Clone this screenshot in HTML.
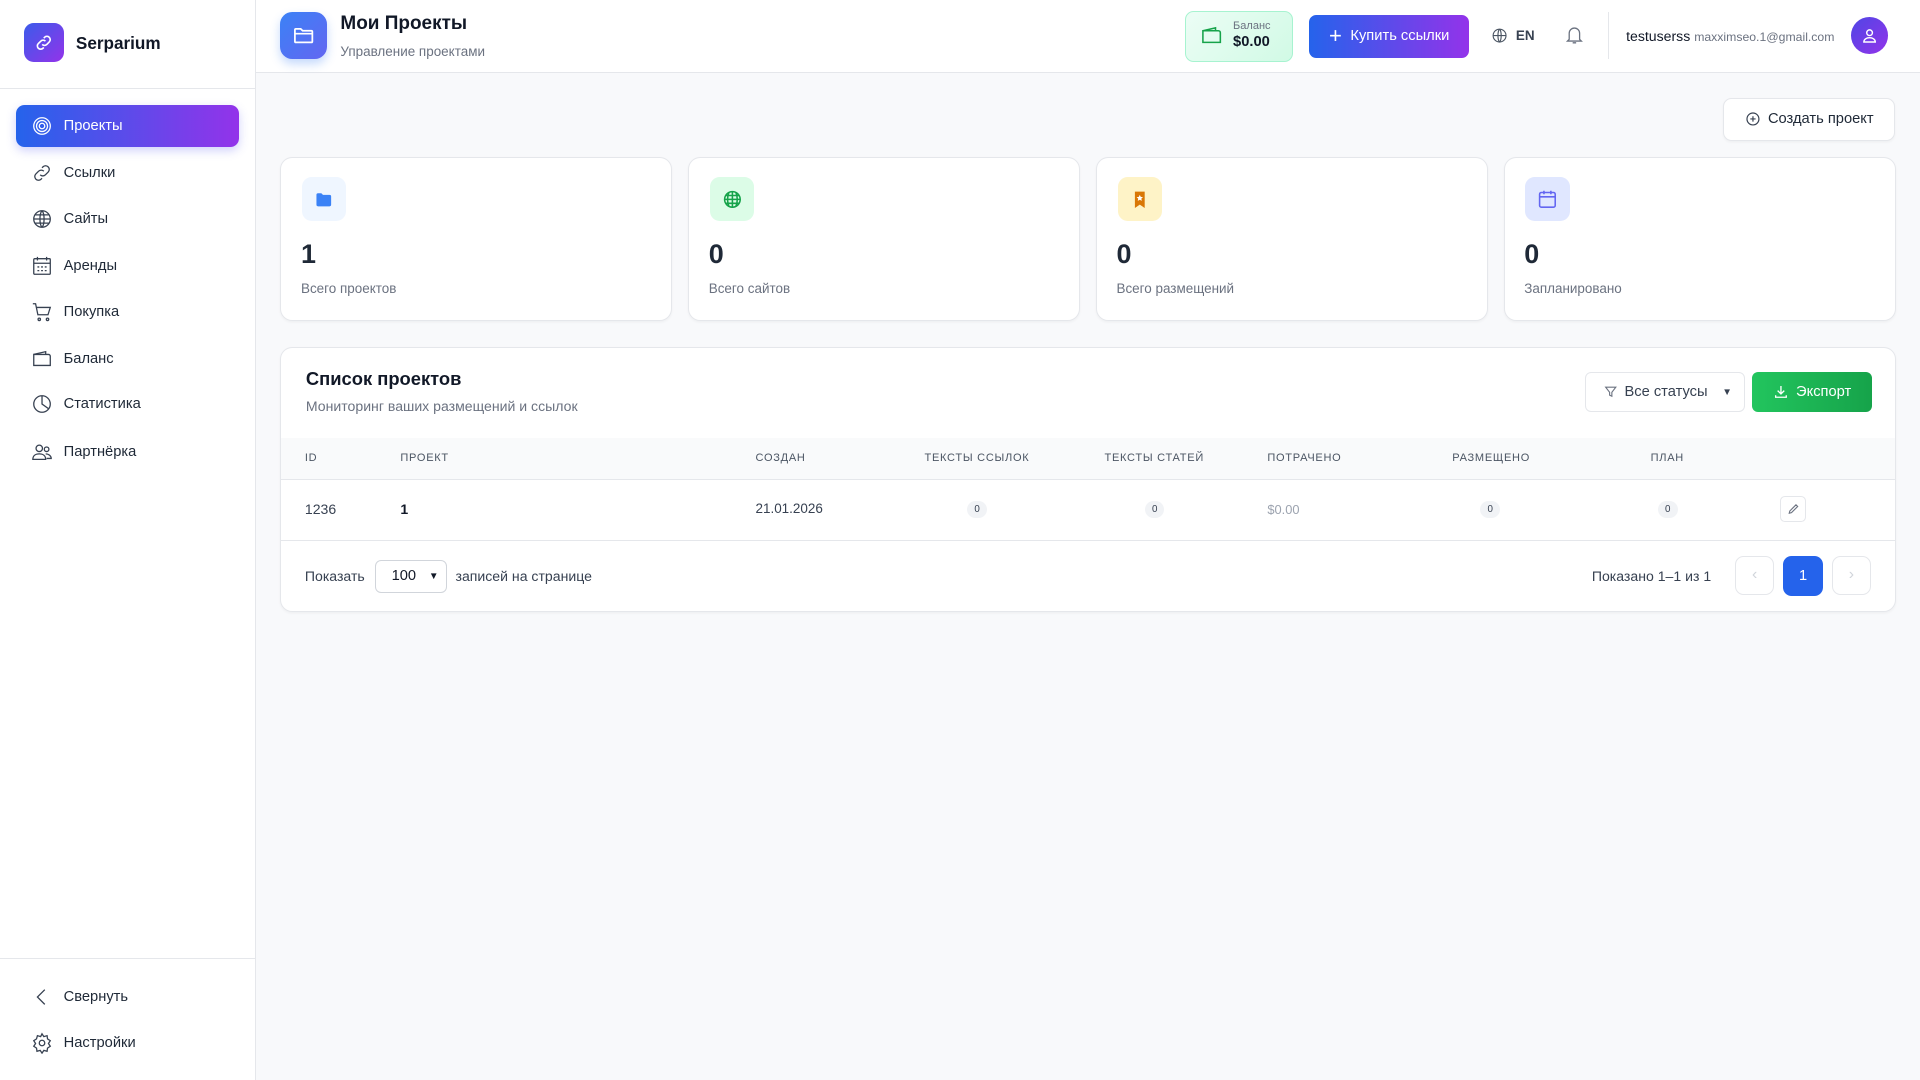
<!DOCTYPE html>
<html><head><meta charset="utf-8">
<style>
html{zoom:1.22449}
*{box-sizing:border-box;margin:0;padding:0}
body{width:1568px;height:882px;overflow:hidden;background:#f8f9fb;font-family:"Liberation Sans","DejaVu Sans",sans-serif;color:#111827;position:relative}
.a{position:absolute}
.side{left:0;top:0;width:209px;height:882px;background:#fff;border-right:1px solid #e5e7eb}
.nav{left:13px;width:182px;height:34px;display:flex;align-items:center;padding-left:12px;font-size:12px;color:#1f2937}
.nav svg{width:18px;height:18px;margin-right:9px;fill:none;stroke:#374151;stroke-width:1.4}
.card{background:#fff;border:1px solid #e5e7eb;border-radius:10px;box-shadow:0 1px 2px rgba(0,0,0,.04)}
.ic{left:17px;top:16px;width:36px;height:36px;border-radius:8px;display:flex;align-items:center;justify-content:center}
.num{left:16px;top:66px;font-size:22px;font-weight:bold;color:#1f2937}
.lbl{left:16px;top:101px;font-size:11px;color:#6b7280}
.th{top:369px;font-size:9px;letter-spacing:.6px;color:#4b5563}
.badge{top:409px;width:16px;height:14px;border-radius:7px;background:#f1f3f6;font-size:8px;color:#374151;text-align:center;line-height:14px}
</style></head><body>
<div class="a side">
  <div class="a" style="left:20px;top:19px;width:32px;height:32px;border-radius:8px;background:linear-gradient(135deg,#3b5bea,#9333ea);display:flex;align-items:center;justify-content:center">
    <svg width="16" height="16" viewBox="0 0 24 24" fill="none" stroke="#fff" stroke-width="2"><path d="M10 14a4 4 0 0 0 5.7 0l3-3a4 4 0 0 0-5.7-5.7l-1 1"/><path d="M14 10a4 4 0 0 0-5.7 0l-3 3a4 4 0 0 0 5.7 5.7l1-1"/></svg>
  </div>
  <div class="a" style="left:62px;top:27px;font-size:14px;font-weight:bold;color:#111827">Serparium</div>
  <div class="a" style="left:0;top:72px;width:208px;border-top:1px solid #e5e7eb"></div>
  <div class="a nav" style="top:86px;border-radius:7px;background:linear-gradient(90deg,#2563eb,#9333ea);color:#fff;box-shadow:0 3px 8px rgba(99,102,241,.3)"><svg viewBox="0 0 24 24" style="stroke:#fff"><circle cx="12" cy="12" r="9"/><circle cx="12" cy="12" r="6"/><circle cx="12" cy="12" r="3"/></svg>Проекты</div>
  <div class="a nav" style="top:124px"><svg viewBox="0 0 24 24"><path d="M10 14a4 4 0 0 0 5.7 0l3-3a4 4 0 0 0-5.7-5.7l-1 1"/><path d="M14 10a4 4 0 0 0-5.7 0l-3 3a4 4 0 0 0 5.7 5.7l1-1"/></svg>Ссылки</div>
  <div class="a nav" style="top:162px"><svg viewBox="0 0 24 24"><circle cx="12" cy="12" r="9"/><path d="M3 12h18M12 3c3 3 3 15 0 18M12 3c-3 3-3 15 0 18M4.5 7.5h15M4.5 16.5h15"/></svg>Сайты</div>
  <div class="a nav" style="top:200px"><svg viewBox="0 0 24 24"><rect x="3" y="4" width="18" height="17" rx="1"/><path d="M3 9h18M7 2v4M17 2v4M7 13h2M11 13h2M15 13h2M7 17h2M11 17h2M15 17h2"/></svg>Аренды</div>
  <div class="a nav" style="top:238px"><svg viewBox="0 0 24 24"><path d="M2 3h3l2.5 12h11L21 7H6"/><circle cx="9" cy="20" r="1.3"/><circle cx="18" cy="20" r="1.3"/></svg>Покупка</div>
  <div class="a nav" style="top:276px"><svg viewBox="0 0 24 24"><path d="M3 7h16a2 2 0 0 1 2 2v10H3z"/><path d="M3 7l13-3v3"/></svg>Баланс</div>
  <div class="a nav" style="top:313px"><svg viewBox="0 0 24 24"><circle cx="12" cy="12" r="9"/><path d="M12 3v9l7 5"/></svg>Статистика</div>
  <div class="a nav" style="top:352px"><svg viewBox="0 0 24 24"><circle cx="9" cy="8" r="3.5"/><circle cx="17" cy="9" r="2.5"/><path d="M2 20c0-4 3-6 7-6s7 2 7 6zM16 14c3 0 6 2 6 5h-5"/></svg>Партнёрка</div>
  <div class="a" style="left:0;top:782px;width:208px;border-top:1px solid #e5e7eb"></div>
  <div class="a nav" style="top:797px"><svg viewBox="0 0 24 24"><path d="M15 4l-8 8 8 8"/></svg>Свернуть</div>
  <div class="a nav" style="top:835px"><svg viewBox="0 0 24 24"><circle cx="12" cy="12" r="3"/><path d="M12 2l2 3 3.5-1 .5 3.5 3 2-2 3 2 3-3 2-.5 3.5L14 20l-2 3-2-3-3.5 1-.5-3.5-3-2 2-3-2-3 3-2L7 4l3.5 1z"/></svg>Настройки</div>
</div>

<div class="a" style="left:209px;top:0;width:1359px;height:60px;background:#fff;border-bottom:1px solid #e5e7eb"></div>
<div class="a" style="left:229px;top:10px;width:38px;height:38px;border-radius:10px;background:linear-gradient(135deg,#3b82f6,#6366f1);box-shadow:0 4px 8px rgba(59,130,246,.3);display:flex;align-items:center;justify-content:center">
  <svg width="19" height="19" viewBox="0 0 24 24" fill="none" stroke="#fff" stroke-width="1.8"><path d="M3 6a1 1 0 0 1 1-1h5l2 2h9a1 1 0 0 1 1 1v10a1 1 0 0 1-1 1H4a1 1 0 0 1-1-1zM3 10h18"/></svg>
</div>
<div class="a" style="left:278px;top:11px;font-size:15.5px;font-weight:bold;color:#111827">Мои Проекты</div>
<div class="a" style="left:278px;top:36px;font-size:11px;color:#6b7280">Управление проектами</div>

<div class="a" style="left:968px;top:9px;width:88px;height:42px;border-radius:7px;background:linear-gradient(135deg,#ecfdf5,#d1fae5);border:1px solid #a7f3d0"></div>
<svg class="a" style="left:980px;top:20px" width="19" height="19" viewBox="0 0 24 24" fill="none" stroke="#16a34a" stroke-width="1.6"><path d="M3 7h16a2 2 0 0 1 2 2v10H3z"/><path d="M3 7l13-3v3"/></svg>
<div class="a" style="left:1007px;top:16px;font-size:9px;color:#6b7280">Баланс</div>
<div class="a" style="left:1007px;top:28px;font-size:12px;font-weight:bold;color:#111827">$0.00</div>
<div class="a" style="left:1069px;top:12px;width:131px;height:35px;border-radius:6px;background:linear-gradient(90deg,#2563eb,#9333ea);color:#fff;font-size:12px;display:flex;align-items:center;justify-content:center;gap:7px"><span style="font-size:18px;font-weight:300;line-height:1">+</span>Купить ссылки</div>
<svg class="a" style="left:1218px;top:22px" width="14" height="14" viewBox="0 0 24 24" fill="none" stroke="#4b5563" stroke-width="1.6"><circle cx="12" cy="12" r="9"/><path d="M3 12h18M12 3c3 3 3 15 0 18M12 3c-3 3-3 15 0 18"/></svg>
<div class="a" style="left:1238px;top:23px;font-size:11px;font-weight:bold;color:#374151">EN</div>
<svg class="a" style="left:1277px;top:20px" width="17" height="18" viewBox="0 0 24 24" fill="none" stroke="#6b7280" stroke-width="1.5"><path d="M6 17V10a6 6 0 0 1 12 0v7l2 2H4zM10 21h4"/></svg>
<div class="a" style="left:1313px;top:10px;height:38px;border-left:1px solid #e5e7eb"></div>
<div class="a" style="left:1328px;top:23px;font-size:11.5px;color:#111827">testuserss <span style="font-size:10px;color:#6b7280">maxximseo.1@gmail.com</span></div>
<div class="a" style="left:1512px;top:14px;width:30px;height:30px;border-radius:50%;background:linear-gradient(135deg,#4f46e5,#9333ea);display:flex;align-items:center;justify-content:center"><svg width="14" height="14" viewBox="0 0 24 24" fill="none" stroke="#fff" stroke-width="2"><circle cx="12" cy="8" r="4"/><path d="M4 21c0-4 4-6 8-6s8 2 8 6z"/></svg></div>

<div class="a card" style="left:1407px;top:80px;width:141px;height:35px;border-radius:7px;display:flex;align-items:center;justify-content:center;gap:6px;font-size:12px;color:#1f2937"><svg width="13" height="13" viewBox="0 0 24 24" fill="none" stroke="#374151" stroke-width="1.8"><circle cx="12" cy="12" r="9"/><path d="M12 8v8M8 12h8"/></svg>Создать проект</div>

<div class="a card" style="left:229px;top:128px;width:320px;height:134px">
  <div class="a ic" style="background:#eff6ff"><svg width="16" height="16" viewBox="0 0 24 24" fill="#3b82f6"><path d="M3 6a2 2 0 0 1 2-2h4l2 2h8a2 2 0 0 1 2 2v10a2 2 0 0 1-2 2H5a2 2 0 0 1-2-2z"/></svg></div>
  <div class="a num">1</div><div class="a lbl">Всего проектов</div></div>
<div class="a card" style="left:562px;top:128px;width:320px;height:134px">
  <div class="a ic" style="background:#dcfce7"><svg width="17" height="17" viewBox="0 0 24 24" fill="none" stroke="#16a34a" stroke-width="1.8"><circle cx="12" cy="12" r="9"/><path d="M3 12h18M12 3v18M8 3.8c-2 5-2 11 0 16.4M16 3.8c2 5 2 11 0 16.4M4.5 7.5h15M4.5 16.5h15"/></svg></div>
  <div class="a num">0</div><div class="a lbl">Всего сайтов</div></div>
<div class="a card" style="left:895px;top:128px;width:320px;height:134px">
  <div class="a ic" style="background:#fef3c7"><svg width="16" height="16" viewBox="0 0 24 24"><path d="M6 2h12v20l-6-4-6 4z" fill="#d97706"/><path d="M12 6l1.2 2.5 2.7.3-2 1.8.6 2.7-2.5-1.4-2.5 1.4.6-2.7-2-1.8 2.7-.3z" fill="#fff"/></svg></div>
  <div class="a num">0</div><div class="a lbl">Всего размещений</div></div>
<div class="a card" style="left:1228px;top:128px;width:320px;height:134px">
  <div class="a ic" style="background:#e0e7ff"><svg width="17" height="17" viewBox="0 0 24 24" fill="none" stroke="#6366f1" stroke-width="1.8"><rect x="3" y="4" width="18" height="17" rx="2"/><path d="M3 9h18M8 2v4M16 2v4"/></svg></div>
  <div class="a num">0</div><div class="a lbl">Запланировано</div></div>

<div class="a card" style="left:229px;top:283px;width:1319px;height:217px;overflow:hidden">
  <div class="a" style="left:20px;top:17px;font-size:15px;font-weight:bold;color:#111827">Список проектов</div>
  <div class="a" style="left:20px;top:41px;font-size:11.5px;color:#6b7280">Мониторинг ваших размещений и ссылок</div>
  <div class="a" style="left:1065px;top:20px;width:130px;height:33px;border:1px solid #e5e7eb;border-radius:5px;font-size:12px;color:#374151;display:flex;align-items:center;padding-left:14px;gap:6px"><svg width="11" height="11" viewBox="0 0 24 24" fill="none" stroke="#6b7280" stroke-width="2"><path d="M3 4h18l-7 9v7l-4-2v-5z"/></svg>Все статусы <span style="font-size:8px;margin-left:6px">▼</span></div>
  <div class="a" style="left:1201px;top:20px;width:98px;height:33px;border-radius:5px;background:linear-gradient(90deg,#22c55e,#16a34a);color:#fff;font-size:12px;display:flex;align-items:center;justify-content:center;gap:6px"><svg width="13" height="13" viewBox="0 0 24 24" fill="none" stroke="#fff" stroke-width="2"><path d="M12 3v12M7 10l5 5 5-5M4 17v3h16v-3"/></svg>Экспорт</div>
  <div class="a" style="left:0;top:74px;width:1319px;height:34px;background:#f9fafb;border-bottom:1px solid #e5e7eb"></div>
  <div class="a" style="left:0;top:157px;width:1319px;border-top:1px solid #e5e7eb"></div>
</div>
<div class="a th" style="left:249px">ID</div>
<div class="a th" style="left:327px">ПРОЕКТ</div>
<div class="a th" style="left:617px">СОЗДАН</div>
<div class="a th" style="left:755px">ТЕКСТЫ ССЫЛОК</div>
<div class="a th" style="left:902px">ТЕКСТЫ СТАТЕЙ</div>
<div class="a th" style="left:1035px">ПОТРАЧЕНО</div>
<div class="a th" style="left:1186px">РАЗМЕЩЕНО</div>
<div class="a th" style="left:1348px">ПЛАН</div>
<div class="a" style="left:249px;top:409px;font-size:11.5px;color:#374151">1236</div>
<div class="a" style="left:327px;top:409px;font-size:11.5px;font-weight:bold;color:#111827">1</div>
<div class="a" style="left:617px;top:409px;font-size:11px;color:#374151">21.01.2026</div>
<div class="a badge" style="left:790px">0</div>
<div class="a badge" style="left:935px">0</div>
<div class="a" style="left:1035px;top:410px;font-size:10.5px;color:#9ca3af">$0.00</div>
<div class="a badge" style="left:1209px">0</div>
<div class="a badge" style="left:1354px">0</div>
<div class="a" style="left:1454px;top:405px;width:21px;height:21px;border:1px solid #e5e7eb;border-radius:4px;display:flex;align-items:center;justify-content:center"><svg width="11" height="11" viewBox="0 0 24 24" fill="none" stroke="#6b7280" stroke-width="2"><path d="M4 20l1-4L16 5l3 3L8 19z"/></svg></div>
<div class="a" style="left:249px;top:464px;font-size:11.5px;color:#374151">Показать</div>
<div class="a" style="left:306px;top:457px;width:59px;height:27px;border:1px solid #d1d5db;border-radius:5px;background:#fff;font-size:12px;color:#111827;display:flex;align-items:center;justify-content:space-between;padding:0 6px 0 13px;white-space:nowrap"><span>100</span><span style="font-size:8px">▼</span></div>
<div class="a" style="left:372px;top:464px;font-size:11.5px;color:#374151">записей на странице</div>
<div class="a" style="left:1300px;top:464px;font-size:11.5px;color:#374151">Показано 1–1 из 1</div>
<div class="a" style="left:1417px;top:454px;width:32px;height:32px;border:1px solid #e5e7eb;border-radius:7px;background:#fff;color:#d1d5db;text-align:center;line-height:30px;font-size:13px">‹</div>
<div class="a" style="left:1456px;top:454px;width:33px;height:33px;border-radius:7px;background:#2563eb;color:#fff;text-align:center;line-height:33px;font-size:12px">1</div>
<div class="a" style="left:1496px;top:454px;width:32px;height:32px;border:1px solid #e5e7eb;border-radius:7px;background:#fff;color:#d1d5db;text-align:center;line-height:30px;font-size:13px">›</div>
</body></html>
